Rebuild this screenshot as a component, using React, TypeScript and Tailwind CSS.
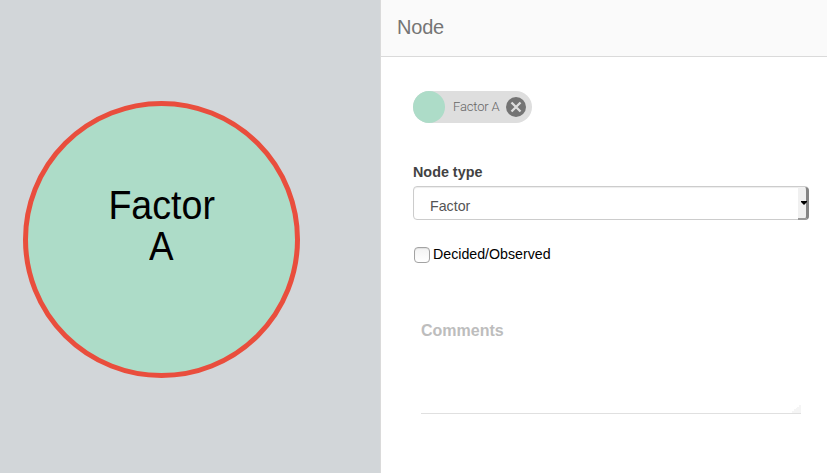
function Chip() {
  return (
    <div className="flex h-8 w-[119px] items-center rounded-full bg-[#dedede]">
      <span className="size-8 shrink-0 rounded-full bg-[#addcc8]" />
      <span className="ml-2 w-[53px] whitespace-nowrap font-['Roboto','Liberation_Sans',sans-serif] text-[13px] font-light leading-8 tracking-[-0.15px] text-[#666]">
        Factor A
      </span>
      <svg className="size-5 shrink-0" viewBox="0 0 20 20">
        <circle cx="10" cy="10" r="10" fill="#747474" />
        <path d="M5.5 5.5l9 9M14.5 5.5l-9 9" stroke="#dedede" strokeWidth="2.3" />
      </svg>
    </div>
  );
}

function TypeSelect() {
  return (
    <div className="mt-1 flex h-[34px] w-[396px] items-stretch rounded border border-[#ccc] bg-white shadow-[inset_0_1px_1px_rgba(0,0,0,0.075)]">
      <span className="flex-1 pl-4 pt-[9px] text-[14px] leading-5 text-[#555]">
        <span className="inline-block origin-left scale-x-[0.96] text-[14.8px]">Factor</span>
      </span>
      <span className="-mb-px -mr-px flex w-[11px] items-center justify-end rounded-r border-b-2 border-r-[3px] border-b-[#999] border-r-[#858585] bg-[#f0f0f0]">
        <svg className="-mr-px h-1 w-[6px]" viewBox="0 0 6 4">
          <path d="M0 0h6v1L3 4 0 1z" fill="#000" />
        </svg>
      </span>
    </div>
  );
}

export default function App() {
  return (
    <div className="flex h-[473px] w-[827px] overflow-hidden bg-white font-['Liberation_Sans',Arial,sans-serif]">
      <section className="w-[380px] shrink-0 bg-[#d2d6d9] pl-[23px] pt-[101px]">
        <div className="flex size-[277px] flex-col items-center rounded-full border-[5px] border-[#e94e3d] bg-[#addcc8] pt-[79px] text-center text-[40px] leading-[41px] text-black">
          <span className="scale-x-[0.94]">Factor</span>
          <span className="scale-x-[0.92]">A</span>
        </div>
      </section>
      <main className="min-w-0 flex-1 border-l border-[#dadada]">
        <header className="h-[57px] border-b border-[#dadada] bg-[#fafafa] pl-4 pt-[13px] text-[20px] leading-7 tracking-[-0.2px] text-[#757575]">
          Node
        </header>
        <div className="pl-8 pt-[34px]">
          <Chip />
          <div className="mt-[39px] text-[14px] font-bold leading-5 text-[#424242]">
            <span className="inline-block origin-left scale-x-[0.97] text-[14.8px]">Node type</span>
          </div>
          <TypeSelect />
          <label className="mt-6 flex h-5 items-center pl-px text-[14px] leading-5 text-black">
            <span className="mr-[3px] mt-[2px] size-4 rounded-[4px] border border-[#a3a3a3] bg-gradient-to-b from-[#f3f3f3] to-white shadow-[inset_0_1px_1px_rgba(0,0,0,0.08)]" />
            <span className="inline-block origin-left scale-x-[0.96] text-[14.8px]">Decided/Observed</span>
          </label>
          <div className="ml-2 mt-[57px] flex h-[93px] w-[380px] justify-between border-b border-[#e0e0e0] text-[16px] font-bold leading-5 text-[#bdbdbd]">
            <span>Comments</span>
            <svg className="size-[9px] self-end" viewBox="0 0 9 9">
              <path d="M0 9V7h2V5h2V4h1V3h2V1h2v8z" fill="#f5f5f5" />
            </svg>
          </div>
        </div>
      </main>
    </div>
  );
}
